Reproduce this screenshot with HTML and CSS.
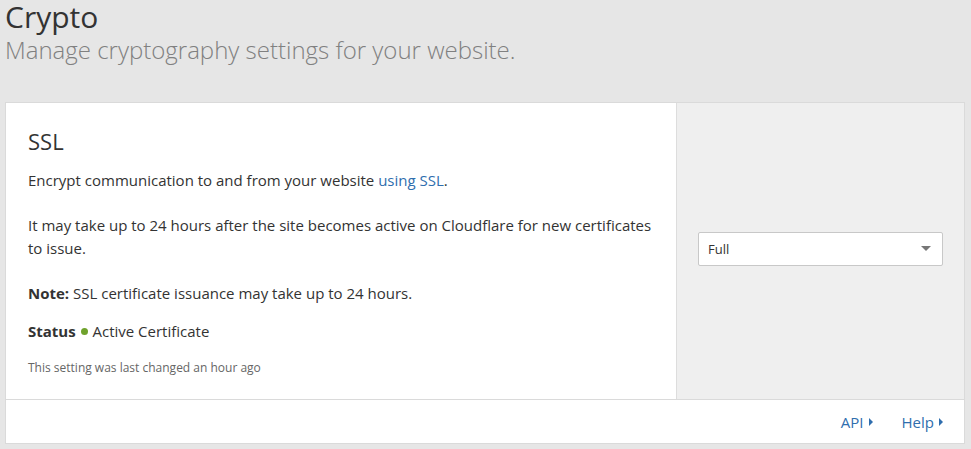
FILE: index.html
```html
<!DOCTYPE html>
<html lang="en">
<head>
<meta charset="utf-8">
<title>Crypto</title>
<link rel="stylesheet" href="styles.css">
</head>
<body>
<header class="page-header">
  <h1 class="page-title">Crypto</h1>
  <p class="page-subtitle">Manage cryptography settings for your website.</p>
</header>
<section class="card">
  <div class="card-body">
    <div class="card-main">
      <h2 class="card-title">SSL</h2>
      <p class="text">Encrypt communication to and from your website <a class="link" href="#">using SSL</a>.</p>
      <p class="text">It may take up to 24 hours after the site becomes active on Cloudflare for new certificates to issue.</p>
      <p class="text"><strong>Note:</strong> SSL certificate issuance may take up to 24 hours.</p>
      <p class="text status"><strong>Status</strong> <span class="dot"></span> Active Certificate</p>
      <p class="changed">This setting was last changed an hour ago</p>
    </div>
    <div class="card-control">
      <div class="select">
        <span class="select-value">Full</span>
        <span class="select-caret"></span>
      </div>
    </div>
  </div>
  <footer class="card-footer">
    <a class="footer-link" href="#">API <span class="tri"></span></a>
    <a class="footer-link" href="#">Help <span class="tri"></span></a>
  </footer>
</section>
</body>
</html>
```
FILE: styles.css
```css
html, body {
  margin: 0;
  padding: 0;
}
body {
  background: #e6e6e6;
  font-family: "Open Sans", "Liberation Sans", sans-serif;
  color: #333;
  padding: 0 6px 0 5px;
}
.page-title {
  margin: 0;
  font-weight: 400;
  font-size: 30px;
  line-height: 34px;
  color: #333;
}
.page-subtitle {
  margin: 0;
  font-weight: 300;
  font-size: 24px;
  line-height: 32px;
  color: #808080;
}
.card {
  margin-top: 36px;
  background: #fff;
  border: 1px solid #dadada;
}
.card-body {
  display: flex;
}
.card-main {
  flex: 1;
  padding: 21px 22px 22px 22px;
}
.card-title {
  margin: 0 0 11px;
  font-weight: 400;
  font-size: 22px;
  line-height: 34px;
  color: #333;
}
.text {
  margin: 0 0 22px;
  font-size: 15px;
  line-height: 23px;
  color: #333;
}
.text strong {
  font-weight: 700;
}
.link {
  color: #2f6eae;
  text-decoration: none;
}
.status {
  margin-top: -7px;
  margin-bottom: 16px;
}
.dot {
  display: inline-block;
  width: 7px;
  height: 7px;
  border-radius: 50%;
  background: #6fa22c;
  vertical-align: 2px;
  margin: 0 1px;
}
.changed {
  margin: 0;
  font-size: 12px;
  line-height: 18px;
  color: #666;
}
.card-control {
  width: 288px;
  box-sizing: border-box;
  flex: none;
  background: #efefef;
  border-left: 1px solid #dddddd;
  display: flex;
  align-items: center;
  padding: 0 21px 5px 21px;
}
.select {
  flex: 1;
  height: 32px;
  background: #fff;
  border: 1px solid #c8c8c8;
  border-radius: 2px;
  display: flex;
  align-items: center;
  justify-content: space-between;
  padding: 0 11px 0 9px;
}
.select-value {
  font-size: 13px;
  color: #333;
}
.select-caret {
  width: 0;
  height: 0;
  border-left: 5px solid transparent;
  border-right: 5px solid transparent;
  border-top: 5px solid #777;
}
.card-footer {
  border-top: 1px solid #dadada;
  height: 43px;
  display: flex;
  justify-content: flex-end;
  align-items: center;
  gap: 29px;
  padding-right: 21px;
}
.footer-link {
  color: #2f6eae;
  text-decoration: none;
  font-size: 15px;
  display: inline-flex;
  align-items: center;
  gap: 5px;
}
.tri {
  display: inline-block;
  width: 0;
  height: 0;
  border-top: 4px solid transparent;
  border-bottom: 4px solid transparent;
  border-left: 4px solid #2f6eae;
}
```
